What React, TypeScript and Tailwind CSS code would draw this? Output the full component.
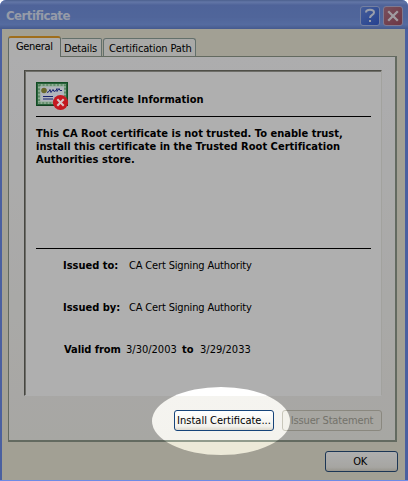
import React from "react";

const ui = "font-['DejaVu_Sans_Condensed','DejaVu_Sans',sans-serif]";

function CertificateIcon() {
  return (
    <svg width="33" height="29" viewBox="0 0 33 29" className="relative z-20 shrink-0">
      <rect x="0.5" y="0.5" width="31" height="23" fill="#27613a" stroke="#124d24" />
      <rect x="2" y="2" width="28" height="20" fill="#8fae95" />
      <rect x="3" y="3" width="26" height="18" fill="none" stroke="#3c7048" strokeWidth="1.2" strokeDasharray="2 1.6" />
      <rect x="4.5" y="4.5" width="23.5" height="15" fill="#b0b5bc" />
      <circle cx="8" cy="8.5" r="2.8" fill="#6a6a2c" />
      <path d="M11 10.5l2-1 1-2 1 3 2-3 1 2 2-1 1-2 0 3 2-3 1 2h2" fill="none" stroke="#18246e" strokeWidth="1" />
      <path d="M7 14.5h10M7 17h10" stroke="#18246e" strokeWidth="1.2" />
      <path d="M1 23.5h31" stroke="#123f20" />
      <circle cx="24.5" cy="20.5" r="7.6" fill="#c51920" />
      <path d="M21.3 17.2l6.4 6.6M27.7 17.2l-6.4 6.6" stroke="#d8c8c9" strokeWidth="2" />
    </svg>
  );
}

function Row({ label, value }: { label: string; value: string }) {
  return (
    <div className="flex h-[42px] items-start">
      <b className="w-[66px] shrink-0">{label}</b>
      <span className="tracking-[-0.16px]">{value}</span>
    </div>
  );
}

export default function App() {
  return (
    <div className={"relative flex h-[481px] w-[408px] flex-col overflow-hidden rounded-t-[6px] border-b border-[#6e8be6] bg-[#6c8cea] text-[11px] leading-[13px] whitespace-nowrap text-black " + ui}>
      <header className="flex h-[29px] shrink-0 items-center bg-[linear-gradient(#6e8bcf_0%,#90acf2_7%,#7391df_18%,#7594e1_60%,#7c9de9_85%,#6683cf_100%)] pl-[6px] pr-[5px] pt-[2px]">
        <h1 className="flex-1 pt-[1px] text-[13px] font-bold leading-4 tracking-[-0.5px] text-[#dbe2f5]">Certificate</h1>
        <div className="flex gap-[3px]">
          <button className="flex size-5 items-center justify-center rounded-[3px] border border-[#a9b9ea] bg-[linear-gradient(135deg,#6488e0,#365fd2)]">
            <svg width="12" height="15" viewBox="0 0 12 15" fill="none" stroke="#dfe6fa" strokeWidth="2"><path d="M2 4.5C2 .8 10 .8 10 4.5C10 7 6 6.8 6 10M6 12v2" /></svg>
          </button>
          <button className="flex size-5 items-center justify-center rounded-[3px] border border-[#b9b0d2] bg-[linear-gradient(135deg,#b07488,#a04f62)]">
            <svg width="12" height="12" viewBox="0 0 12 12" stroke="#eae2ea" strokeWidth="2.3"><path d="M1.2 1.2l9.6 9.6M10.8 1.2L1.2 10.8" /></svg>
          </button>
        </div>
      </header>

      <main className="ml-[2px] mr-[3px] flex min-h-0 flex-1 flex-col bg-[#ece9d8] pl-[6px] pr-[6px] pt-[7px]">
        <nav className="flex h-5 shrink-0 items-end">
          <div className="relative z-[1] -mb-px h-[21px] w-[53px] rounded-t-[3px] border-x border-t-2 border-x-[#8c9b94] border-t-[#e8a02a] bg-[#fdfdfd] pl-[7px] pt-[2px] tracking-[-0.35px]">General</div>
          <div className="h-[18px] w-[41px] rounded-t-[2px] border-x border-t border-[#91a39d] border-l-transparent bg-[#f7f7f4] pl-[2px] pt-[3px] tracking-[-0.2px]">Details</div>
          <div className="ml-px h-[18px] w-[93px] rounded-t-[3px] border-x border-t border-[#91a39d] bg-[#f7f7f4] pl-[5px] pt-[3px] tracking-[-0.15px]">Certification Path</div>
        </nav>

        <section className="flex h-[386px] w-[389px] shrink-0 flex-col border border-b-2 border-r-2 border-[#919b8c] bg-[linear-gradient(#fcfcfe,#f4f3ee)] pl-[15px] pt-[13px]">
          <div className="h-[326px] w-[358px] border border-b-white border-l-[#66665f] border-r-[#edede7] border-t-[#747469] bg-white pl-[11px] pt-[11px] shadow-[inset_1px_1px_#a1a19a]">
            <div className="flex h-[35px] w-[335px] border-b border-black">
              <CertificateIcon />
              <b className="ml-[6px] pt-[11px] tracking-[0.04px]">Certificate Information</b>
            </div>
            <p className="h-[132px] w-[335px] border-b border-black pt-[10px] font-bold tracking-[0.02px]">
              This CA Root certificate is not trusted. To enable trust,<br />
              install this certificate in the Trusted Root Certification<br />
              Authorities store.
            </p>
            <div className="pl-[27px] pt-[10px]">
              <Row label="Issued to:" value="CA Cert Signing Authority" />
              <Row label="Issued by:" value="CA Cert Signing Authority" />
              <div className="flex">
                <b className="w-[63px] pl-px tracking-[-0.05px]">Valid from</b><span className="w-[56px]">3/30/2003</span><b className="w-[18px]">to</b><span>3/29/2033</span>
              </div>
            </div>
          </div>
          <div className="mt-[14px] flex gap-2 pl-[150px]">
            <button className="h-[21px] w-[100px] rounded-[3px] border border-[#16447a] bg-[linear-gradient(#fff,#f2f1ec_80%,#ddd9ce)]">Install Certificate...</button>
            <button className="h-[21px] w-[100px] rounded-[3px] border border-[#c9c7ba] bg-[#f3f2eb] text-[#a9a79b] tracking-[-0.15px]">Issuer Statement</button>
          </div>
        </section>
        <div className="mt-[9px] flex justify-end">
          <button className="mr-px h-[21px] w-[73px] rounded-[3px] border border-[#294f7d] bg-[linear-gradient(#fff,#f2f1ec_80%,#ddd9ce)] pr-[3px] tracking-[-0.5px]">OK</button>
        </div>
      </main>

      <div className="pointer-events-none absolute left-[152px] top-[387px] z-10 h-[68px] w-[138px] rounded-[50%] shadow-[0_0_0_600px_rgba(0,0,0,0.315)]" />
    </div>
  );
}
